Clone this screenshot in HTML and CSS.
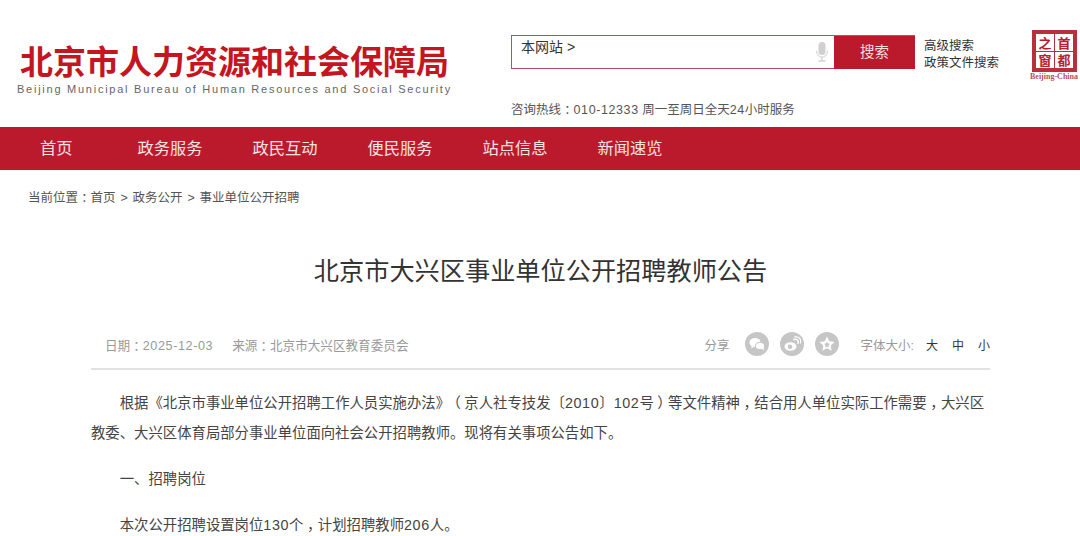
FILE: index.html
```html
<!DOCTYPE html>
<html lang="zh-CN">
<head>
<meta charset="utf-8">
<title>北京市大兴区事业单位公开招聘教师公告</title>
<link rel="stylesheet" href="styles.css">
</head>
<body>
<header class="header">
  <div class="brand">
    <div class="brand-cn">北京市人力资源和社会保障局</div>
    <div class="brand-en">Beijing Municipal Bureau of Human Resources and Social Security</div>
  </div>
  <div class="tools">
    <div class="search-row">
      <div class="search">
        <span class="search-scope">本网站 &gt;</span>
        <svg class="mic" viewBox="0 0 14 22" width="14" height="22"><rect x="3.5" y="1" width="7" height="13" rx="3.5" fill="#d0d0d0"/><path d="M1.5 9.5c0 4 2.500 6.500 5.500 6.500s5.500-2.500 5.500-6.500" fill="none" stroke="#dcdcdc" stroke-width="1.500"/><path d="M7 16v3M3.500 20h7" stroke="#dcdcdc" stroke-width="2"/></svg>
        <div class="search-btn">搜索</div>
      </div>
      <div class="search-links"><a>高级搜索</a><a>政策文件搜索</a></div>
      <div class="capital">
        <div class="capital-grid"><span>之</span><span>首</span><span>窗</span><span>都</span></div>
        <div class="capital-en">Beijing-China</div>
      </div>
    </div>
    <div class="hotline">咨询热线<span class="fw">：</span><span class="num">010-12333</span> 周一至周日全天<span class="num">24</span>小时服务</div>
  </div>
</header>
<nav class="nav">
  <a>首页</a><a>政务服务</a><a>政民互动</a><a>便民服务</a><a>站点信息</a><a>新闻速览</a>
</nav>
<div class="crumbs">当前位置<span class="fw">：</span>首页 &gt; 政务公开 &gt; 事业单位公开招聘</div>
<main class="article">
  <h1 class="title">北京市大兴区事业单位公开招聘教师公告</h1>
  <div class="meta">
    <div class="meta-left"><span>日期<span class="fw">：</span><span class="num">2025-12-03</span></span><span>来源<span class="fw">：</span>北京市大兴区教育委员会</span></div>
    <div class="meta-right">
      <span class="share-label">分享</span>
      <span class="share">
        <svg viewBox="0 0 24 24" width="24" height="24"><circle cx="12" cy="12" r="12" fill="#c6c6c6"/><ellipse cx="10" cy="10.500" rx="5.500" ry="4.500" fill="#fff"/><path d="M7 13.500l-1 3 3-1.500z" fill="#fff"/><ellipse cx="15" cy="14" rx="4.500" ry="3.600" fill="#fff" stroke="#c6c6c6"/><path d="M17 17l2 1.500-.5-3z" fill="#fff"/></svg>
        <svg viewBox="0 0 24 24" width="24" height="24"><circle cx="12" cy="12" r="12" fill="#c6c6c6"/><ellipse cx="10.500" cy="14.500" rx="6" ry="4.300" fill="#fff"/><circle cx="10" cy="14.700" r="2.300" fill="#c6c6c6"/><path d="M14 7.500c3 -1 5 1 4 4" fill="none" stroke="#fff" stroke-width="1.500" stroke-linecap="round"/><path d="M14.500 5c4.500-1 7 2 6 6" fill="none" stroke="#fff" stroke-width="1.200" stroke-linecap="round"/></svg>
        <svg viewBox="0 0 24 24" width="24" height="24"><circle cx="12" cy="12" r="12" fill="#c6c6c6"/><path d="M12 4.500l2.300 4.800 5.200.7-3.800 3.600.9 5.200-4.600-2.500-4.600 2.500.9-5.200L4.500 10l5.200-.7z" fill="#fff"/><path d="M12 9.500l1 2 2.100.3-1.500 1.500.3 2.100-1.900-1-1.900 1 .3-2.100-1.500-1.500 2.100-.3z" fill="#c6c6c6"/></svg>
      </span>
      <span class="font-label">字体大小:</span>
      <span class="font-sizes"><a>大</a><a>中</a><a>小</a></span>
    </div>
  </div>
  <div class="body-text">
    <p>根据《北京市事业单位公开招聘工作人员实施办法》<span class="fw">（</span>京人社专技发〔<span class="num">2010</span>〕<span class="num">102</span>号<span class="fw">）</span>等文件精神<span class="fw">，</span>结合用人单位实际工作需要<span class="fw">，</span>大兴区<br>教委、大兴区体育局部分事业单位面向社会公开招聘教师。现将有关事项公告如下。</p>
    <p>一、招聘岗位</p>
    <p>本次公开招聘设置岗位<span class="num">130</span>个<span class="fw">，</span>计划招聘教师<span class="num">206</span>人。</p>
  </div>
</main>
</body>
</html>
```
FILE: styles.css
```css
* { box-sizing: border-box; }
html, body { margin: 0; padding: 0; }
body {
  width: 1080px;
  height: 536px;
  overflow: hidden;
  background: #fff;
  color: #444;
  font-family: "Liberation Sans", "Noto Sans CJK SC", sans-serif;
}
.fw {
  font-family: "Noto Sans CJK SC", sans-serif;
  font-feature-settings: "halt";
  line-height: 0;
  padding: 0 0.25em;
}
.num { letter-spacing: 0.6px; }
.header { display: flex; height: 127px; }
.brand { width: 511px; padding: 37px 0 0 17px; }
.brand-cn {
  margin: 0 0 1px 3px;
  font-family: "Noto Sans CJK SC", sans-serif;
  font-size: 33px;
  line-height: 46px;
  font-weight: 700;
  color: #c3161f;
  white-space: nowrap;
}
.brand-en {
  font-size: 11px;
  line-height: 10px;
  letter-spacing: 1.75px;
  color: #666;
  white-space: nowrap;
}
.tools { flex: 1; padding-top: 29px; }
.search-row { display: flex; align-items: flex-start; }
.search {
  display: flex;
  align-items: center;
  width: 404px;
  height: 34px;
  margin-top: 6px;
  border: 1px solid #b4505f;
  border-right: 0;
}
.search-scope { flex: 1; padding: 0 0 12px 9px; font-size: 14px; color: #333; }
.mic { margin-right: 5px; }
.search-btn {
  width: 81px;
  height: 33px;
  margin: -1px 0;
  background: #bb1a2d;
  color: #f5dfe1;
  font-size: 14.5px;
  line-height: 33px;
  text-align: center;
}
.search-links {
  display: flex;
  flex-direction: column;
  width: 117px;
  padding: 9px 0 0 9px;
  font-size: 12.5px;
  line-height: 17px;
  color: #333;
  white-space: nowrap;
}
.capital { width: 46px; padding-top: 1px; }
.capital-grid {
  display: grid;
  grid-template-columns: 1fr 1fr;
  grid-template-rows: 1fr 1fr;
  width: 45px;
  height: 42px;
  padding: 2px;
  gap: 1px;
  border: 2px solid #b8303c;
  background: #b8303c;
}
.capital-grid span {
  display: flex;
  align-items: center;
  justify-content: center;
  background: #fff;
  color: #b8202c;
  font-family: "Noto Sans CJK SC", sans-serif;
  font-size: 13px;
  font-weight: 700;
  line-height: 1;
}
.capital-en {
  margin: 1px 0 0 -2px;
  font-family: "Liberation Serif", serif;
  font-size: 8px;
  line-height: 7px;
  font-weight: 700;
  color: #b8505a;
  white-space: nowrap;
}
.hotline { margin-top: 21px; font-size: 12.5px; line-height: 18px; color: #555; white-space: nowrap; }
.nav {
  display: flex;
  gap: 50px;
  height: 43px;
  padding-left: 40px;
  background: #bb1a2d;
  color: #f6e3e4;
  font-size: 16.25px;
  line-height: 43px;
}
.nav a:first-child { margin-right: 15px; }
.crumbs {
  padding: 20px 0 0 28px;
  font-size: 12.5px;
  line-height: 17px;
  word-spacing: 1.4px;
  color: #555;
}
.article { padding: 0 90px 0 91px; }
.title {
  margin: 0;
  padding-top: 47px;
  font-size: 25.2px;
  line-height: 34px;
  font-weight: 400;
  text-align: center;
  color: #333;
}
.meta {
  display: flex;
  justify-content: space-between;
  align-items: center;
  height: 50px;
  margin-top: 32px;
  padding: 0 0 0 14px;
  border-bottom: 2px solid #e2e2e2;
  font-size: 12.5px;
  color: #999;
}
.meta-left { display: flex; gap: 19px; font-size: 12.6px; }
.meta-right { display: flex; align-items: center; }
.share-label { margin-right: 16px; }
.share { display: flex; gap: 11px; margin-right: 21px; }
.font-label { margin-right: 12px; }
.font-sizes { display: flex; gap: 14px; font-size: 12px; color: #333; }
.body-text { padding-top: 18px; }
.body-text p {
  margin: 0 0 16px;
  font-size: 14.37px;
  line-height: 30px;
  text-indent: 2em;
  color: #444;
}
```
